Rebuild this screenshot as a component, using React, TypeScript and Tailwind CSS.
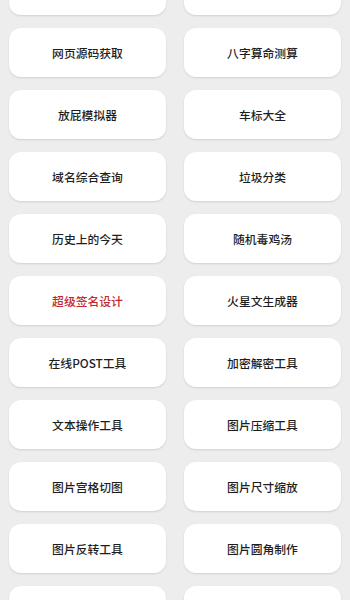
const items: { label: string; red?: boolean }[] = [
  { label: "" },
  { label: "" },
  { label: "网页源码获取" },
  { label: "八字算命测算" },
  { label: "放屁模拟器" },
  { label: "车标大全" },
  { label: "域名综合查询" },
  { label: "垃圾分类" },
  { label: "历史上的今天" },
  { label: "随机毒鸡汤" },
  { label: "超级签名设计", red: true },
  { label: "火星文生成器" },
  { label: "在线POST工具" },
  { label: "加密解密工具" },
  { label: "文本操作工具" },
  { label: "图片压缩工具" },
  { label: "图片宫格切图" },
  { label: "图片尺寸缩放" },
  { label: "图片反转工具" },
  { label: "图片圆角制作" },
  { label: "" },
  { label: "" },
];

export default function App() {
  return (
    <div
      className="h-[600px] w-[350px] overflow-hidden bg-[#ededed]"
      style={{ fontFamily: '"Noto Sans CJK SC", "Noto Sans", sans-serif' }}
    >
      <div className="-mt-[34px] grid grid-cols-2 gap-x-[18px] gap-y-[13px] px-[9px]">
        {items.map((it, i) => (
          <div
            key={i}
            className={`flex h-[49px] items-center justify-center rounded-[12px] bg-white text-[11.8px] font-medium shadow-[0_1px_2px_rgba(0,0,0,0.12)] ${
              it.red ? "text-[#bf2a2e]" : "text-[#1e1e1e]"
            }`}
          >
            {it.label}
          </div>
        ))}
      </div>
    </div>
  );
}
